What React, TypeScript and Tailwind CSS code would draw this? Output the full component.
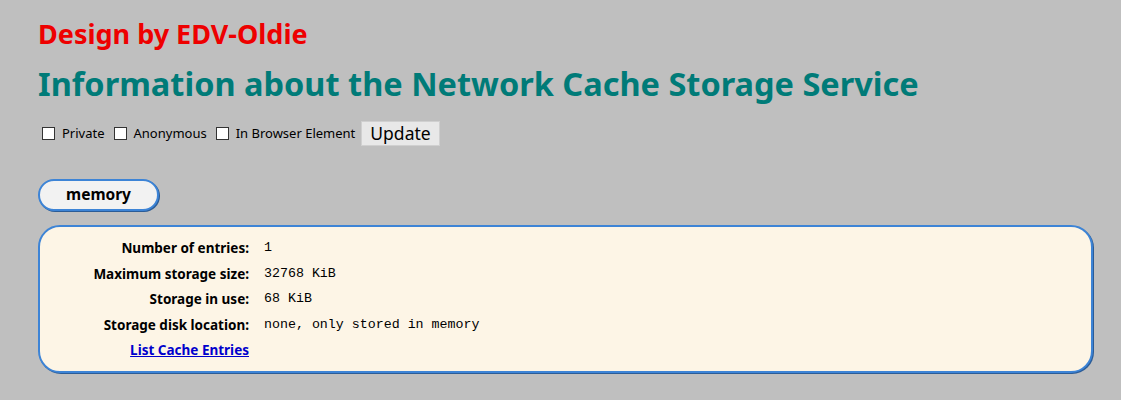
const rows: { label: string; value: string }[] = [
  { label: "Number of entries:", value: "1" },
  { label: "Maximum storage size:", value: "32768 KiB" },
  { label: "Storage in use:", value: "68 KiB" },
  { label: "Storage disk location:", value: "none, only stored in memory" },
];

function Check(props: { label: string }) {
  return (
    <label className="flex items-center gap-[7px]">
      <span className="inline-block h-[13px] w-[13px] border border-[#333] bg-white" />
      <span>{props.label}</span>
    </label>
  );
}

export default function App() {
  return (
    <div
      className="min-h-[400px] bg-[#bfbfbf] pr-[28px] pl-[38px] pt-[17px] text-black"
      style={{ fontFamily: '"Noto Sans", "Open Sans", sans-serif' }}
    >
      <h2 className="text-[27px] leading-[34px] font-bold text-[#ee0000]">Design by EDV-Oldie</h2>
      <h1 className="mt-[13px] text-[32.5px] leading-[40px] font-bold text-[#007b78]">
        Information about the Network Cache Storage Service
      </h1>

      <div className="mt-[17px] flex items-center pl-[4px] text-[13px]">
        <div className="flex items-center gap-[9px]">
          <Check label="Private" />
          <Check label="Anonymous" />
          <Check label="In Browser Element" />
        </div>
        <button className="ml-[6px] h-[25px] border border-[#d0d0d0] bg-[#e8e8e8] px-[8px] text-[17.5px] leading-[23px]">
          Update
        </button>
      </div>

      <div className="mt-[33px] flex h-[32px] w-[121px] items-center justify-center rounded-full border-2 border-[#3d84d6] bg-[#f2f2f2] text-[15.5px] font-bold shadow-[1px_1px_0_#2b5c97]">
        memory
      </div>

      <div className="mt-[14px] rounded-[22px] border-2 border-[#3d84d6] bg-[#fdf5e6] pt-[11px] pb-[11px] shadow-[1px_1px_0_#2b5c97]">
        <div className="grid grid-cols-[209px_1fr] gap-x-[15px] gap-y-[5.6px]">
          {rows.map((r) => (
            <div key={r.label} className="contents">
              <div className="text-right text-[13.5px] leading-[20px] font-bold">{r.label}</div>
              <div
                className="text-[13.3px] leading-[20px]"
                style={{ fontFamily: '"Liberation Mono", monospace' }}
              >
                {r.value}
              </div>
            </div>
          ))}
          <div className="text-right text-[13.5px] leading-[20px] font-bold">
            <a href="#" className="text-[#0000cc] underline">
              List Cache Entries
            </a>
          </div>
          <div />
        </div>
      </div>
    </div>
  );
}
